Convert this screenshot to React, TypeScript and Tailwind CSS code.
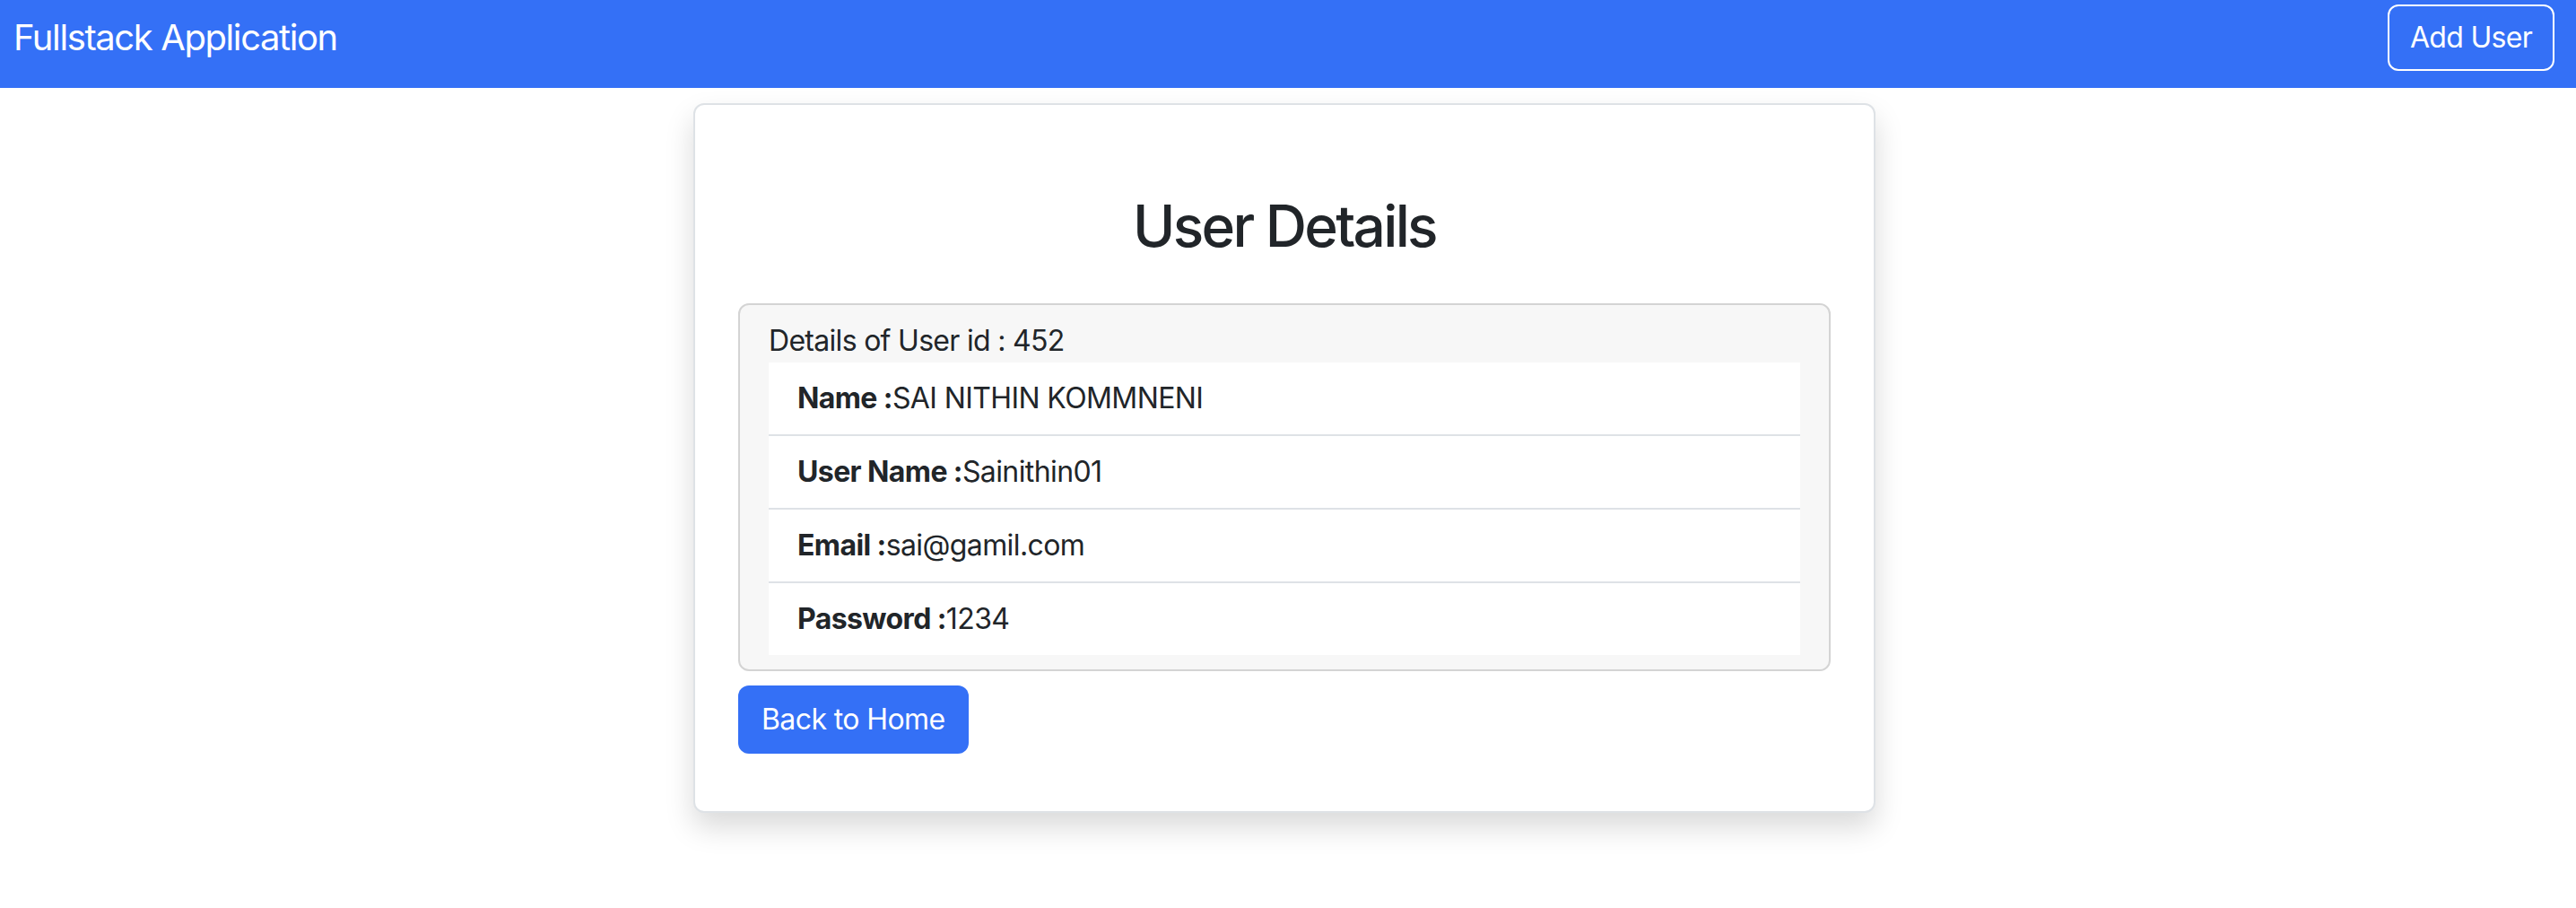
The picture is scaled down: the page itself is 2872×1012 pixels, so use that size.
import React from "react";

const user = {
  id: 452,
  name: "SAI NITHIN KOMMNENI",
  username: "Sainithin01",
  email: "sai@gamil.com",
  password: "1234",
};

const rows = [
  { label: "Name :", value: user.name },
  { label: "User Name :", value: user.username },
  { label: "Email :", value: user.email },
  { label: "Password :", value: user.password },
];

const Navbar = () => (
  <nav className="flex h-[98px] items-start justify-between bg-[#3470f6] pl-[15px] pr-[24px] pt-[5px]">
    <a className="mt-[7px] text-[40px] leading-[60px] tracking-[-1.4px] text-white">Fullstack Application</a>
    <button className="h-[74px] w-[186px] rounded-[12px] border-2 border-white text-[32px] leading-[48px] tracking-[-0.7px] text-white">
      Add User
    </button>
  </nav>
);

export default function App() {
  return (
    <div className="min-h-screen bg-white font-['Inter','Liberation_Sans',sans-serif] text-[#212529]">
      <Navbar />
      <div className="pl-[773px] pt-[17px] pb-[60px]">
        <div className="w-[1318px] rounded-[12px] border-2 border-[#dee2e6] bg-white p-[48px] shadow-[0_16px_32px_rgba(0,0,0,0.15)]">
          <h2 className="m-[48px] text-center text-[64px] font-medium leading-[77px] tracking-[-2.7px]">
            User Details
          </h2>
          <div className="overflow-hidden rounded-[12px] border-2 border-[#d4d4d4] bg-[#f7f7f7] px-[32px] py-[16px]">
            <div className="text-[32px] leading-[48px] tracking-[-0.7px]">Details of User id : {user.id}</div>
            <ul className="bg-white">
              {rows.map((r, i) => (
                <li
                  key={r.label}
                  className={
                    "px-[32px] py-[16px] text-[32px] leading-[48px] tracking-[-0.6px] " +
                    (i < rows.length - 1 ? "border-b-2 border-[#dee2e6]" : "")
                  }
                >
                  <b className="font-bold">{r.label}</b>
                  {r.value}
                </li>
              ))}
            </ul>
          </div>
          <button className="my-[16px] h-[76px] rounded-[12px] bg-[#3470f6] px-[26px] text-[32px] leading-[48px] tracking-[-0.6px] text-white">
            Back to Home
          </button>
        </div>
      </div>
    </div>
  );
}
